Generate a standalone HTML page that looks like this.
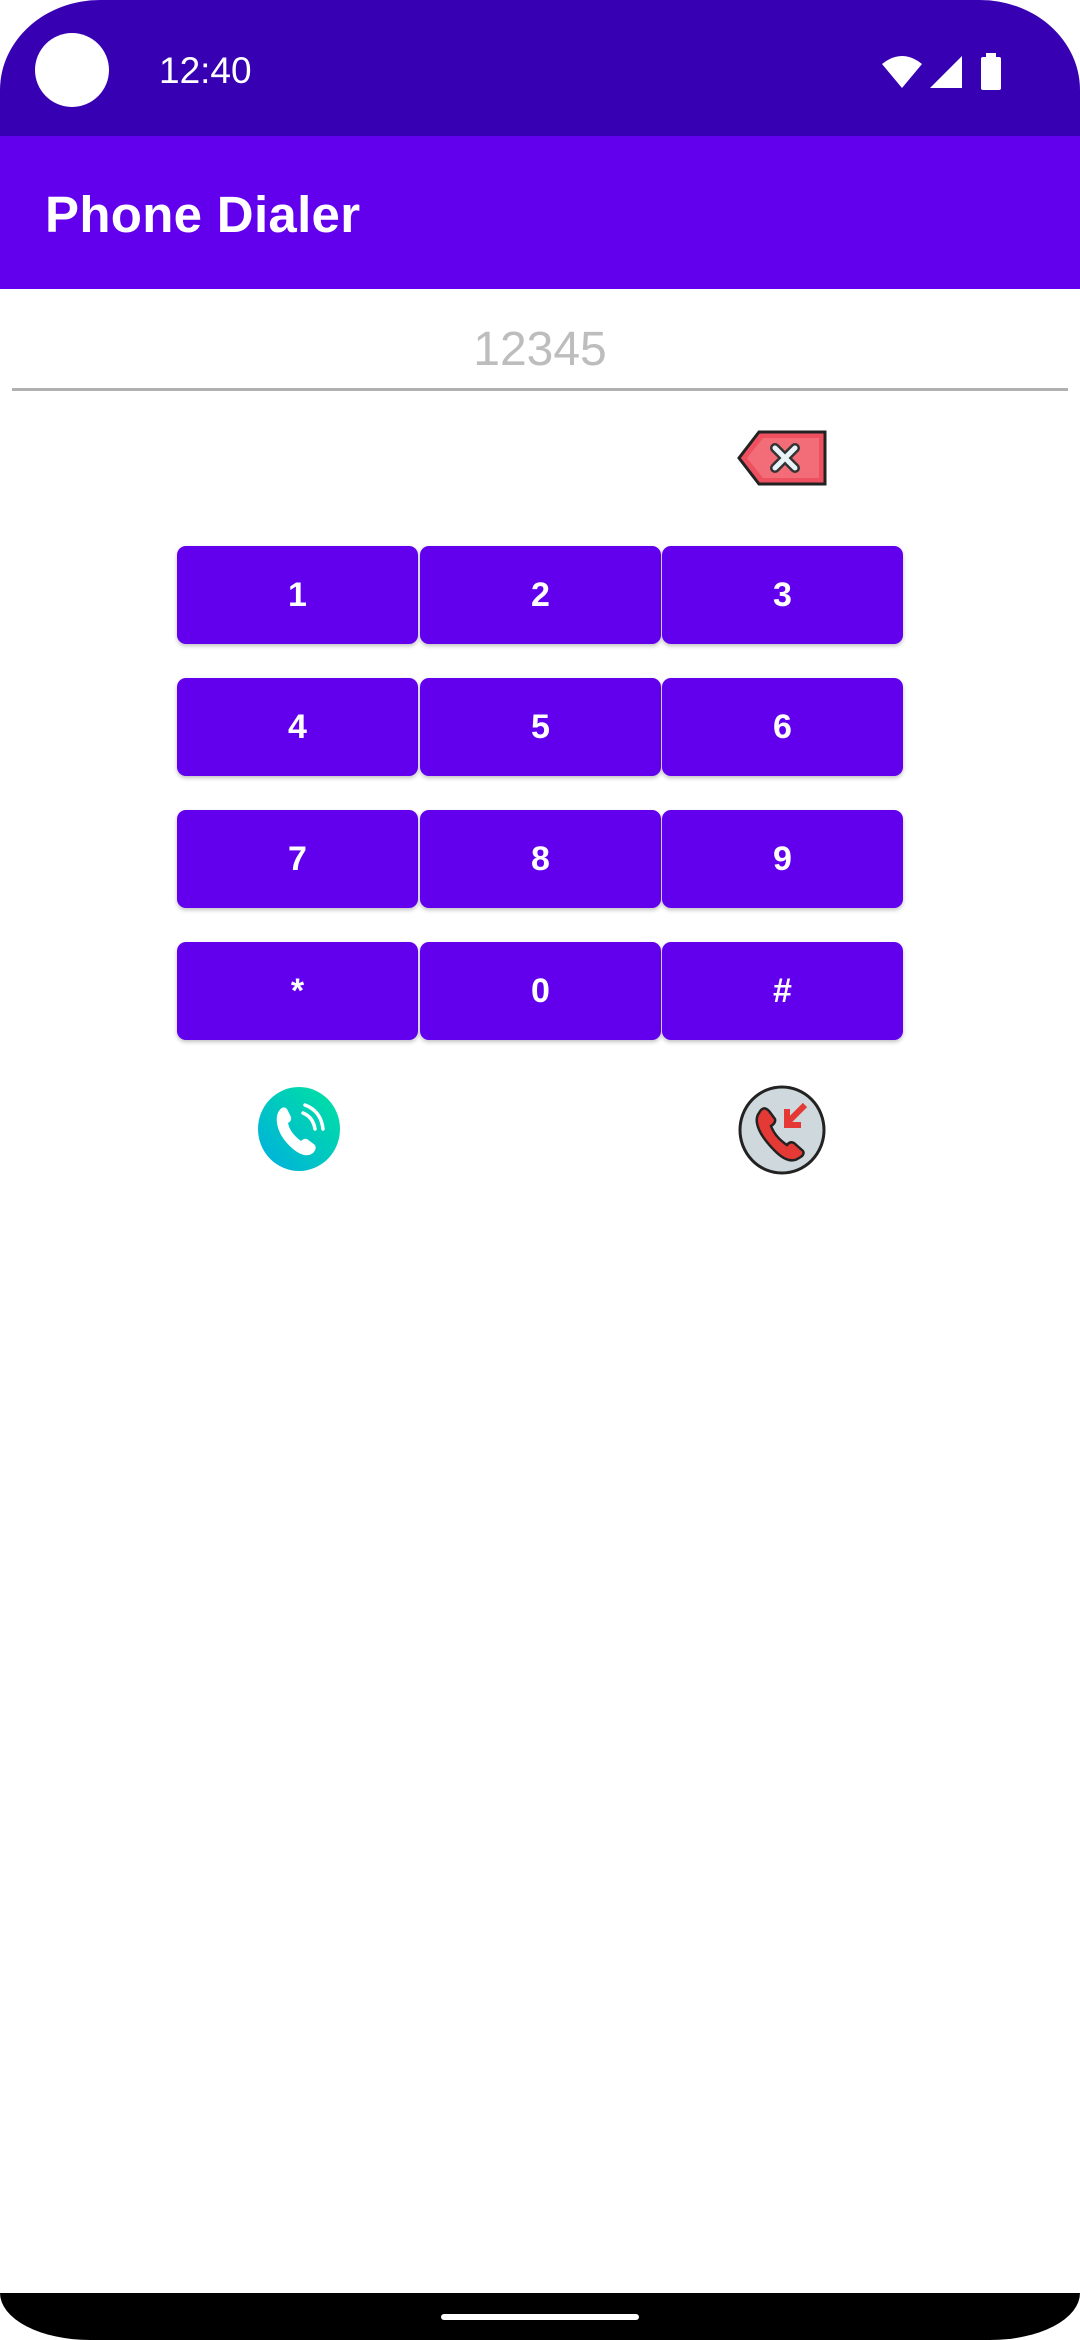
<!DOCTYPE html>
<html><head><meta charset="utf-8"><style>
*{margin:0;padding:0;box-sizing:border-box}
body{width:1080px;height:2340px;background:#fff;position:relative;overflow:hidden;font-family:"Liberation Sans",Roboto,sans-serif}
.status{position:absolute;left:0;top:0;width:1080px;height:140px;background:#3700B3;border-radius:100px 100px 0 0/90px 90px 0 0}
.cam{position:absolute;left:35px;top:33px;width:74px;height:74px;border-radius:50%;background:#fff}
.time{position:absolute;left:159px;top:50px;color:#fff;font-size:37px}
.appbar{position:absolute;left:0;top:136px;width:1080px;height:153px;background:#6200EE}
.title{position:absolute;left:45px;top:185px;color:#fff;font-size:51px;font-weight:bold;letter-spacing:0.3px}
.num{position:absolute;left:0;width:1080px;top:322px;text-align:center;color:#bdbdbd;font-size:48px}
.line{position:absolute;left:12px;width:1056px;top:388px;height:3px;background:#b0b0b0}
.btn{position:absolute;width:241px;height:98px;background:#6200EE;border-radius:9px;color:#fff;font-size:34px;font-weight:bold;display:flex;align-items:center;justify-content:center;box-shadow:0 2px 4px rgba(0,0,0,.25)}
.nav{position:absolute;left:0;top:2293px;width:1080px;height:47px;background:#000;border-radius:0 0 90px 90px/0 0 47px 47px}
.pill{position:absolute;left:441px;top:2314px;width:198px;height:6px;background:#fff;border-radius:3px}
</style></head><body>
<div class="status"><div class="cam"></div><div class="time">12:40</div>
<svg style="position:absolute;left:880px;top:52px" width="125" height="40" viewBox="0 0 125 40">
<path d="M2 12 Q22 -4 42 12 L22 36 Z" fill="#fff"/>
<path d="M50 36 L82 4 L82 36 Z" fill="#fff"/>
<rect x="101" y="5" width="20" height="33" rx="2" fill="#fff"/><rect x="106" y="1" width="10" height="5" fill="#fff"/>
</svg></div>
<div class="appbar"></div>
<div class="title">Phone Dialer</div>
<div class="num">12345</div>
<div class="line"></div>
<svg style="position:absolute;left:737px;top:430px" width="90" height="56" viewBox="0 0 90 56">
<path d="M22 2 L88 2 L88 54 L22 54 L2 28 Z" fill="#ef5060" stroke="#222" stroke-width="3"/>
<path d="M26 8 L82 8 L82 48 L26 48 L10 28 Z" fill="#f26d78"/>
<path d="M38 18 L58 38 M58 18 L38 38" stroke="#333" stroke-width="10" stroke-linecap="round"/>
<path d="M38 18 L58 38 M58 18 L38 38" stroke="#e8f4f8" stroke-width="5" stroke-linecap="round"/>
</svg>
<div class="btn" style="left:177px;top:546px">1</div>
<div class="btn" style="left:420px;top:546px">2</div>
<div class="btn" style="left:662px;top:546px">3</div>
<div class="btn" style="left:177px;top:678px">4</div>
<div class="btn" style="left:420px;top:678px">5</div>
<div class="btn" style="left:662px;top:678px">6</div>
<div class="btn" style="left:177px;top:810px">7</div>
<div class="btn" style="left:420px;top:810px">8</div>
<div class="btn" style="left:662px;top:810px">9</div>
<div class="btn" style="left:177px;top:942px">*</div>
<div class="btn" style="left:420px;top:942px">0</div>
<div class="btn" style="left:662px;top:942px">#</div>
<svg style="position:absolute;left:257px;top:1087px" width="84" height="84" viewBox="0 0 84 84">
<defs><linearGradient id="g" x1="1" y1="0" x2="0" y2="1"><stop offset="0" stop-color="#00e3a0"/><stop offset="1" stop-color="#00aee0"/></linearGradient></defs>
<ellipse cx="42" cy="42" rx="41" ry="42" fill="url(#g)"/>
<path d="M22 24 Q26 18 30 22 L34 30 Q35 34 31 36 Q33 46 44 54 Q47 51 50 52 L58 58 Q60 62 56 66 Q48 72 36 62 Q22 50 20 36 Q19 28 22 24Z" fill="#fff"/>
<path d="M46 26 Q56 30 58 42 M48 18 Q64 24 66 42" stroke="#fff" stroke-width="3.5" fill="none" stroke-linecap="round"/>
</svg>
<svg style="position:absolute;left:737px;top:1085px" width="90" height="90" viewBox="0 0 90 90">
<ellipse cx="45" cy="45" rx="42" ry="43" fill="#cfd8dc" stroke="#222" stroke-width="3"/>
<path d="M22 28 Q26 20 32 26 L38 34 Q39 38 34 41 Q38 52 50 60 Q53 56 57 58 L66 66 Q68 70 62 73 Q52 80 38 66 Q22 50 20 38 Q19 32 22 28Z" fill="#e53935" stroke="#222" stroke-width="2.5"/>
<path d="M68 20 L52 36 M50 24 L50 40 L64 40" stroke="#e53935" stroke-width="6" fill="none"/>
</svg>
<div class="nav"></div><div class="pill"></div>
</body></html>
